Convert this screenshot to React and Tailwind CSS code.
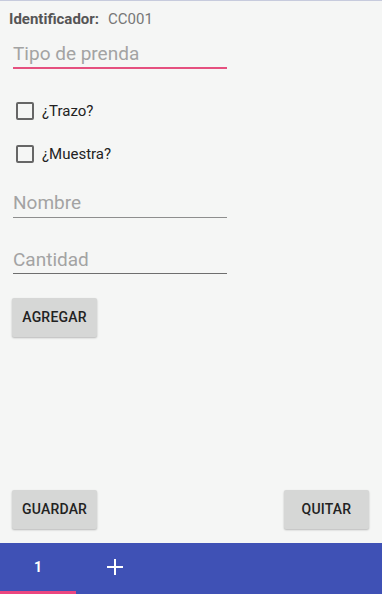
const font = { fontFamily: "Roboto, 'Liberation Sans', sans-serif" };

const btn =
  "h-[39px] px-[10px] bg-[#d6d7d6] rounded-[2px] shadow-[0_1px_2px_rgba(0,0,0,0.25)] text-[14px] font-medium text-[#222] tracking-[0.2px]";

function Check({ label, className }) {
  return (
    <div className={`flex items-center h-[24px] ${className}`}>
      <span className="ml-[16px] w-[18px] h-[18px] rounded-[2px] border-2 border-[#666]" />
      <span className="ml-[8px] text-[15px] text-[#222]">{label}</span>
    </div>
  );
}

function Field({ hint, className, line }) {
  return (
    <div className={`ml-[13px] w-[214px] ${className}`}>
      <div className="h-[24px] leading-[24px] text-[19px] text-[#a3a3a3]">{hint}</div>
      {line}
    </div>
  );
}

export default function App() {
  return (
    <div className="h-[594px] w-[382px] flex flex-col bg-[#f5f6f5] overflow-hidden" style={font}>
      <div className="h-px bg-[#c7cbdd]" />
      <div className="flex items-center h-[20px] mt-[8px] pl-[9px] text-[15px]">
        <span className="font-bold text-[#555]">Identificador:</span>
        <span className="ml-[9px] text-[#777]">CC001</span>
      </div>
      <Field
        hint="Tipo de prenda"
        className="mt-[13px]"
        line={<div className="mt-[1px] h-[2px] bg-[#e5507f]" />}
      />
      <Check label="¿Trazo?" className="mt-[30px]" />
      <Check label="¿Muestra?" className="mt-[19px]" />
      <Field
        hint="Nombre"
        className="mt-[25px]"
        line={<div className="mt-[2px] h-px bg-[#8e8e8e]" />}
      />
      <Field
        hint="Cantidad"
        className="mt-[30px]"
        line={<div className="mt-[1px] h-px bg-[#6e6e6e]" />}
      />
      <div className="mt-[24px] ml-[12px]">
        <button className={`${btn} w-[85px]`}>AGREGAR</button>
      </div>
      <div className="flex-1" />
      <div className="flex justify-between px-[12px] mb-[14px]">
        <button className={`${btn} w-[85px]`}>GUARDAR</button>
        <button className={`${btn} w-[85px] mr-px`}>QUITAR</button>
      </div>
      <div className="h-[51px] bg-[#3f51b5] flex flex-col">
        <div className="flex-1 flex items-center text-white">
          <div className="w-[76px] text-center text-[14px] font-bold">1</div>
          <div className="ml-[1px] w-[76px] flex justify-center">
            <svg width="18" height="18" viewBox="0 0 18 18" fill="none" stroke="white" strokeWidth="2">
              <path d="M9 1v16M1 9h16" />
            </svg>
          </div>
        </div>
        <div className="w-[76px] h-[3px] bg-[#ec4680]" />
      </div>
    </div>
  );
}
